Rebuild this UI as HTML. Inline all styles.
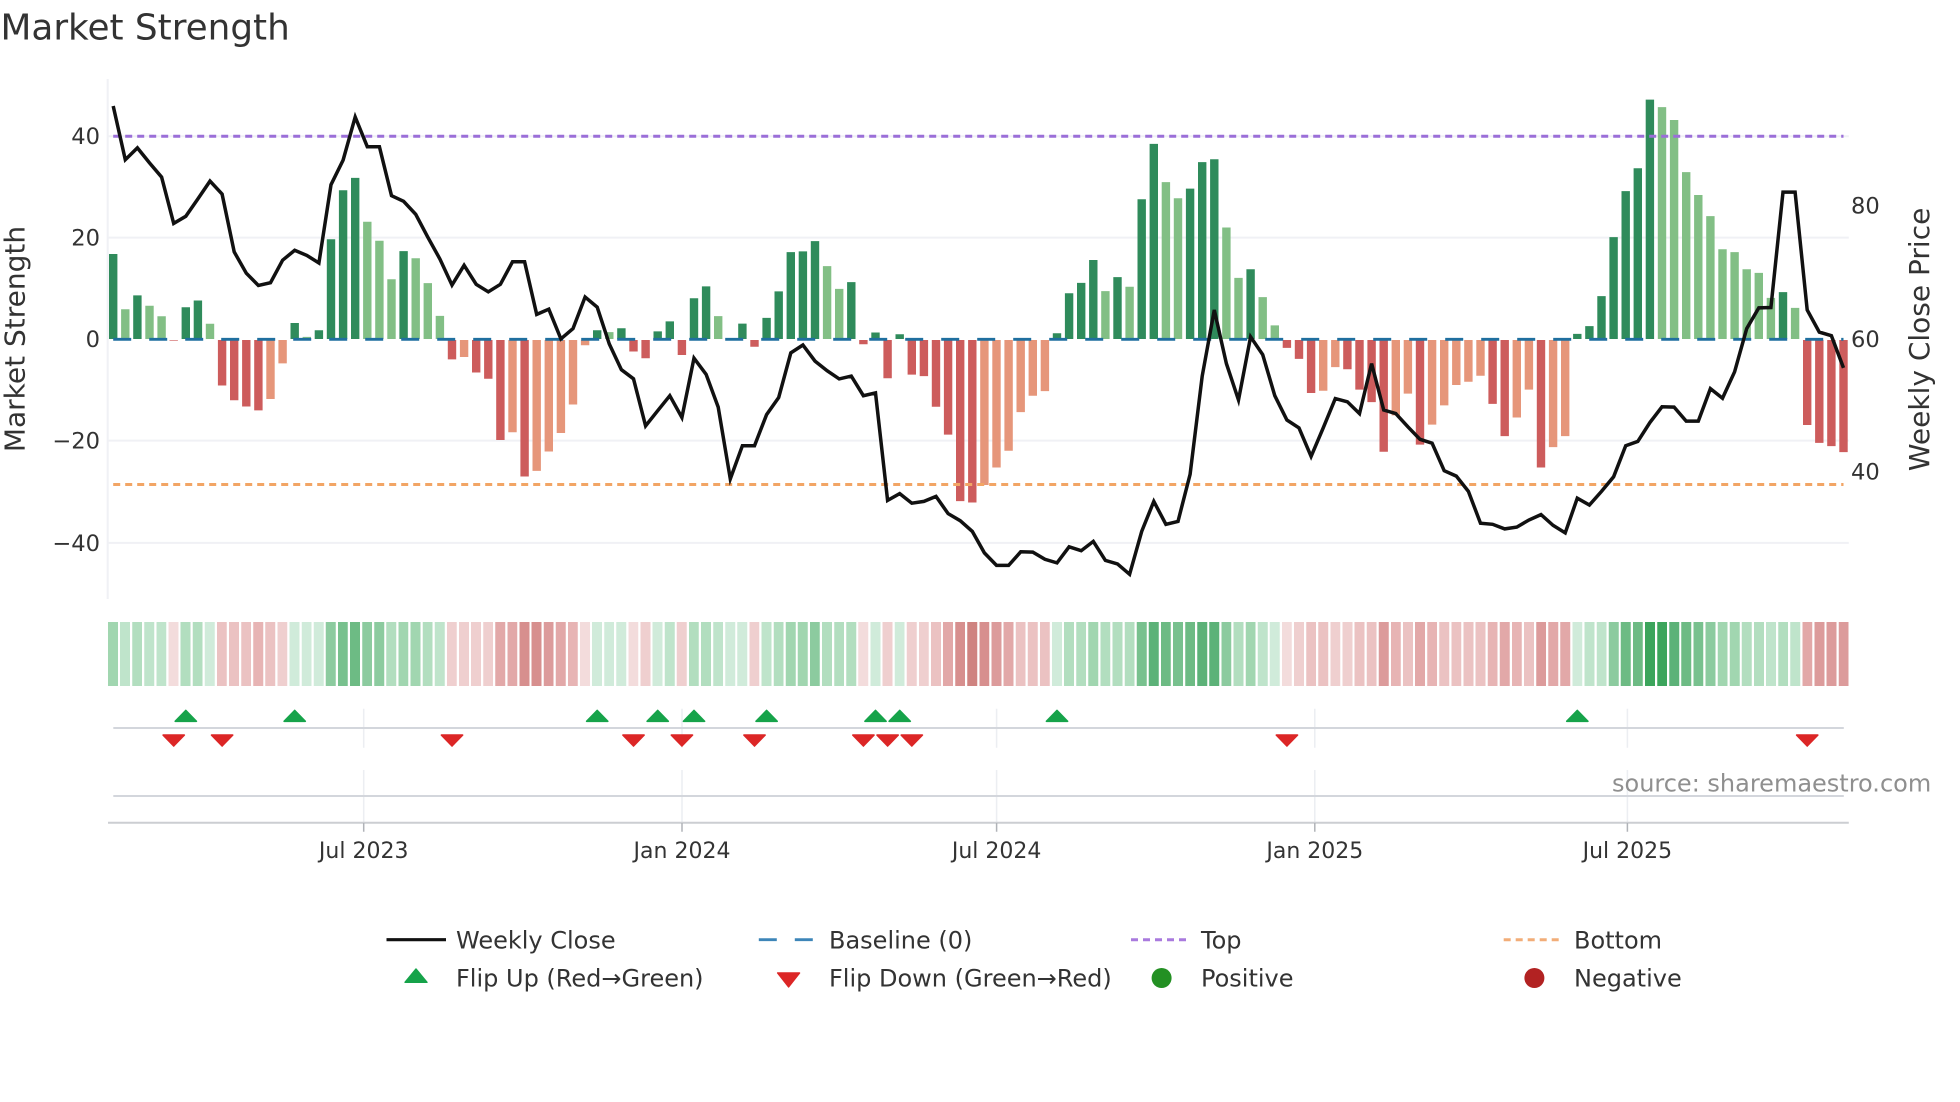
<!DOCTYPE html>
<html><head><meta charset="utf-8"><title>Market Strength</title>
<style>
html,body{margin:0;padding:0;background:#fff}
body{width:1960px;height:1102px;position:relative;overflow:hidden}
svg{position:absolute;left:0;top:0}
text{font-family:"DejaVu Sans","Liberation Sans",sans-serif;fill:#333}
.t{font-size:22.6px}.l{font-size:24px}
#s{position:absolute;left:108.2px;top:622px;width:6962.4px;height:64px;display:grid;grid-template-columns:repeat(144,1fr);column-gap:8.8px;transform:scale(.25,1);transform-origin:0 0}
#s i{display:block}
.g1{background:#d0ebda}.g2{background:#bfe4cb}.g3{background:#b2debf}.g4{background:#a1d6b0}.g5{background:#8ccb9f}.g6{background:#78c18e}.g7{background:#6dbb84}.g8{background:#5cb278}.g9{background:#3ca55c}
.r1{background:#f3dcdc}.r2{background:#efcfcf}.r3{background:#ebc2c2}.r4{background:#e7b4b4}.r5{background:#e2a8a8}.r6{background:#dc9b9b}.r7{background:#d78f8e}.r8{background:#cf8380}
</style></head><body>
<svg width="1960" height="1102" viewBox="0 0 1960 1102" xmlns="http://www.w3.org/2000/svg">
<text x="0.5" y="39.5" style="font-size:35.8px">Market Strength</text>
<text transform="translate(24.5 339) rotate(-90)" text-anchor="middle" style="font-size:28px">Market Strength</text>
<text transform="translate(1929 339.4) rotate(-90)" text-anchor="middle" style="font-size:28px">Weekly Close Price</text>
<g stroke="#f0f1f5" stroke-width="2" fill="none">
<path d="M107.7 79V599M108 237.6H1848.8M108 440.6H1848.8M108 542.9H1848.8M108 136.2H1848.8"/>
</g>
<g class="t" text-anchor="end">
<text class="t" x="100" y="144.2">40</text>
<text class="t" x="100" y="245.6">20</text>
<text class="t" x="100" y="347.2">0</text>
<text class="t" x="100" y="448.5">−20</text>
<text class="t" x="100" y="550.9">−40</text>
</g>
<text class="t" x="1851" y="213.4">80</text>
<text class="t" x="1851" y="346.9">60</text>
<text class="t" x="1851" y="479.4">40</text>
<g transform="translate(113.2 0)" fill="none" stroke-width="8.4">
<path stroke="#2f8b5b" d="M0 339V254M24.2 339V295.4M72.6 339V307.2M84.7 339V300.5M181.5 339V323M205.7 339V330.2M217.8 339V239.2M229.9 339V190.2M242 339V177.9M290.4 339V251.1M484 339V330.2M508.2 339V328.2M544.5 339V331.4M556.6 339V321.4M580.8 339V298.2M592.9 339V286.4M629.2 339V323.6M653.4 339V317.9M665.5 339V291.4M677.6 339V252.1M689.7 339V251.4M701.8 339V241.1M738.1 339V282.1M762.3 339V332.5M786.5 339V334.3M943.8 339V333.2M955.9 339V293.2M968 339V282.9M980.1 339V260M1004.3 339V277.1M1028.5 339V199.3M1040.6 339V143.9M1076.9 339V188.6M1089 339V162.1M1101.1 339V159.3M1137.4 339V269.3M1464.1 339V333.9M1476.2 339V326.1M1488.3 339V296.1M1500.4 339V237.1M1512.5 339V191.1M1524.6 339V168.2M1536.7 339V99.6M1669.8 339V292.1"/>
<path stroke="#82bf85" d="M12.1 339V309.2M36.3 339V305.7M48.4 339V316.3M96.8 339V323.8M193.6 339V336.9M254.1 339V221.8M266.2 339V240.8M278.3 339V279.2M302.5 339V258.2M314.6 339V283.1M326.7 339V315.9M496.1 339V332.1M605 339V316.1M713.9 339V266.1M726 339V288.9M992.2 339V291.1M1016.4 339V286.8M1052.7 339V182.1M1064.8 339V198.2M1113.2 339V227.5M1125.3 339V277.9M1149.5 339V297.1M1161.6 339V325.4M1548.8 339V107.1M1560.9 339V120M1573 339V172.1M1585.1 339V195M1597.2 339V216.1M1609.3 339V249.3M1621.4 339V252.1M1633.5 339V269.3M1645.6 339V272.9M1657.7 339V297.9M1681.9 339V307.9"/>
<path stroke="#cd5c5c" d="M60.5 340V340.6M108.9 340V385.5M121 340V400.2M133.1 340V406.5M145.2 340V410.4M338.8 340V359.4M363 340V372.5M375.1 340V378.8M387.2 340V440M411.4 340V476.5M520.3 340V351.5M532.4 340V358.2M568.7 340V355M641.3 340V346.8M750.2 340V344.3M774.4 340V378.2M798.6 340V374.6M810.7 340V376.1M822.8 340V406.8M834.9 340V434.6M847 340V501.1M859.1 340V502.5M1173.7 340V347.9M1185.8 340V358.9M1197.9 340V393M1234.2 340V369.3M1246.3 340V389.6M1258.4 340V402.1M1270.5 340V451.8M1306.8 340V444.6M1379.4 340V403.9M1391.5 340V436.1M1427.8 340V467.5M1694 340V425M1706.1 340V442.9M1718.2 340V446.1M1730.3 340V452.1"/>
<path stroke="#e6967a" d="M157.3 340V399M169.4 340V363.4M350.9 340V357M399.3 340V432.2M423.5 340V470.9M435.6 340V451.5M447.7 340V433M459.8 340V404.5M471.9 340V345.2M871.2 340V485M883.3 340V467.5M895.4 340V450.7M907.5 340V412.1M919.6 340V395.7M931.7 340V391.1M1210 340V390.7M1222.1 340V367.1M1282.6 340V415.4M1294.7 340V393.6M1318.9 340V424.6M1331 340V405.4M1343.1 340V385M1355.2 340V381.8M1367.3 340V375.7M1403.6 340V417.5M1415.7 340V389.6M1439.9 340V447.1M1452 340V436.1"/>
<path stroke="#1f6f9f" stroke-width="2.9" stroke-dasharray="18 18" d="M0 339.3H1730.3"/>
<path stroke="#9b6fd8" stroke-width="3" stroke-dasharray="7 5" d="M0 136.3H1730.3"/>
<path stroke="#f2a565" stroke-width="3" stroke-dasharray="7 5" d="M0 484.5H1730.3"/>
<polyline stroke="#111" stroke-width="3.5" stroke-linejoin="miter" points="0,106 12.1,159.7 24.2,147.9 36.3,162.9 48.4,177.1 60.5,223.4 72.6,216.3 84.7,198.9 96.8,181.1 108.9,194.1 121,251.9 133.1,273.2 145.2,285.5 157.3,282.7 169.4,260.2 181.5,250.3 193.6,255.4 205.7,263 217.8,184.7 229.9,160.1 242,117 254.1,146.7 266.2,146.7 278.3,195.7 290.4,201.3 302.5,214.3 314.6,237.2 326.7,259 338.8,285.1 350.9,265.3 363,284.3 375.1,291.8 387.2,284.3 399.3,261.8 411.4,261.8 423.5,314.4 435.6,309.2 447.7,338.9 459.8,328.6 471.9,297 484,307.2 496.1,344 508.2,369.7 520.3,378.8 532.4,425.9 544.5,410.7 556.6,395.7 568.7,417.5 580.8,358.2 592.9,374.3 605,407.1 617.1,478.9 629.2,445.7 641.3,445.7 653.4,414.6 665.5,397.5 677.6,352.9 689.7,345 701.8,361.1 713.9,370.7 726,378.9 738.1,376.1 750.2,395.7 762.3,392.9 774.4,500.4 786.5,493.6 798.6,503.2 810.7,501.4 822.8,496.4 834.9,513.6 847,520.7 859.1,531.4 871.2,552.9 883.3,565.4 895.4,565.4 907.5,551.8 919.6,552.1 931.7,559.3 943.8,562.9 955.9,546.8 968,550.7 980.1,541.4 992.2,560.4 1004.3,563.9 1016.4,574.3 1028.5,531.4 1040.6,501.4 1052.7,524.3 1064.8,521.4 1076.9,474.3 1089,376.1 1101.1,310 1113.2,363.6 1125.3,400 1137.4,336.8 1149.5,354.6 1161.6,395.7 1173.7,420 1185.8,427.9 1197.9,456.4 1210,427.9 1222.1,398.6 1234.2,401.8 1246.3,413.6 1258.4,363.6 1270.5,410 1282.6,413.6 1294.7,426.8 1306.8,439.3 1318.9,443.2 1331,470.7 1343.1,476.1 1355.2,491.4 1367.3,523.2 1379.4,524.3 1391.5,528.9 1403.6,527.1 1415.7,520 1427.8,514.6 1439.9,525.4 1452,532.9 1464.1,498.2 1476.2,505 1488.3,491.4 1500.4,476.8 1512.5,445.7 1524.6,441.4 1536.7,422.5 1548.8,406.8 1560.9,407.1 1573,421.1 1585.1,421.1 1597.2,388.6 1609.3,398.2 1621.4,371.8 1633.5,328.6 1645.6,307.9 1657.7,307.5 1669.8,192.1 1681.9,192.1 1694,310 1706.1,332.1 1718.2,335.7 1730.3,367.9"/>
</g>
<g fill="none">
<path stroke="#eceef2" stroke-width="1.5" d="M363.7 708.7V747.7M363.7 770V822M682 708.7V747.7M682 770V822M996.6 708.7V747.7M996.6 770V822M1314.8 708.7V747.7M1314.8 770V822M1627.4 708.7V747.7M1627.4 770V822"/>
<path stroke="#d3d6dc" stroke-width="2" d="M113.3 728H1843.8M113.3 796H1843.8"/>
<path stroke="#ccced2" stroke-width="2" d="M108 822.7H1848.8"/>
<path stroke="#b0b3b8" stroke-width="1.5" d="M363.7 823V831.7M682 823V831.7M996.6 823V831.7M1314.8 823V831.7M1627.4 823V831.7"/>
</g>
<path fill="#16a34a" stroke="#16a34a" stroke-width="1.6" stroke-linejoin="round" d="M185.8 710.4l10.6 10.9h-21.2zM294.7 710.4l10.6 10.9h-21.2zM597.2 710.4l10.6 10.9h-21.2zM657.7 710.4l10.6 10.9h-21.2zM694 710.4l10.6 10.9h-21.2zM766.6 710.4l10.6 10.9h-21.2zM875.5 710.4l10.6 10.9h-21.2zM899.7 710.4l10.6 10.9h-21.2zM1057 710.4l10.6 10.9h-21.2zM1577.3 710.4l10.6 10.9h-21.2z"/>
<path fill="#dc2626" stroke="#dc2626" stroke-width="1.6" stroke-linejoin="round" d="M173.7 746l10.6 -10.9h-21.2zM222.1 746l10.6 -10.9h-21.2zM452 746l10.6 -10.9h-21.2zM633.5 746l10.6 -10.9h-21.2zM681.9 746l10.6 -10.9h-21.2zM754.5 746l10.6 -10.9h-21.2zM863.4 746l10.6 -10.9h-21.2zM887.6 746l10.6 -10.9h-21.2zM911.8 746l10.6 -10.9h-21.2zM1286.9 746l10.6 -10.9h-21.2zM1807.2 746l10.6 -10.9h-21.2z"/>
<g text-anchor="middle">
<text class="t" x="363.7" y="858" style="font-size:22px">Jul 2023</text>
<text class="t" x="682" y="858" style="font-size:22px">Jan 2024</text>
<text class="t" x="996.6" y="858" style="font-size:22px">Jul 2024</text>
<text class="t" x="1314.8" y="858" style="font-size:22px">Jan 2025</text>
<text class="t" x="1627.4" y="858" style="font-size:22px">Jul 2025</text>
</g>
<text x="1612" y="791.7" style="font-size:24px;fill:#8f8f8f">source: sharemaestro.com</text>
<path stroke="#111" stroke-width="3.2" d="M386.5 939.7H446"/>
<path stroke="#3d85b8" stroke-width="2.8" stroke-dasharray="18 18" d="M758.8 939.7H813"/>
<path stroke="#a97ade" stroke-width="3" stroke-dasharray="7 5" d="M1131 939.7H1187"/>
<path stroke="#f2ad78" stroke-width="3" stroke-dasharray="7 5" d="M1503.7 939.7H1559.7"/>
<path fill="#16a34a" stroke="#16a34a" stroke-width="1.4" stroke-linejoin="round" d="M416 969l11 13.3h-22z"/>
<path fill="#dc2626" stroke="#dc2626" stroke-width="1.4" stroke-linejoin="round" d="M788.6 987l11 -14h-22z"/>
<circle cx="1161.6" cy="978" r="10" fill="#239023"/>
<circle cx="1534.4" cy="978" r="10" fill="#b22222"/>
<text class="l" x="456" y="948.3">Weekly Close</text>
<text class="l" x="829" y="948.3">Baseline (0)</text>
<text class="l" x="1201" y="948.3">Top</text>
<text class="l" x="1574" y="948.3">Bottom</text>
<text class="l" x="456" y="986.7">Flip Up (Red→Green)</text>
<text class="l" x="829" y="986.7">Flip Down (Green→Red)</text>
<text class="l" x="1201" y="986.7">Positive</text>
<text class="l" x="1574" y="986.7">Negative</text>
</svg>
<div id="s"><i class="g4"></i><i class="g2"></i><i class="g3"></i><i class="g2"></i><i class="g2"></i><i class="r1"></i><i class="g3"></i><i class="g3"></i><i class="g1"></i><i class="r3"></i><i class="r3"></i><i class="r3"></i><i class="r4"></i><i class="r3"></i><i class="r2"></i><i class="g1"></i><i class="g1"></i><i class="g1"></i><i class="g5"></i><i class="g6"></i><i class="g7"></i><i class="g5"></i><i class="g5"></i><i class="g3"></i><i class="g4"></i><i class="g4"></i><i class="g3"></i><i class="g2"></i><i class="r2"></i><i class="r2"></i><i class="r2"></i><i class="r2"></i><i class="r5"></i><i class="r5"></i><i class="r7"></i><i class="r7"></i><i class="r6"></i><i class="r5"></i><i class="r4"></i><i class="r1"></i><i class="g1"></i><i class="g1"></i><i class="g1"></i><i class="r1"></i><i class="r2"></i><i class="g1"></i><i class="g2"></i><i class="r2"></i><i class="g3"></i><i class="g3"></i><i class="g2"></i><i class="g1"></i><i class="g1"></i><i class="r2"></i><i class="g2"></i><i class="g3"></i><i class="g4"></i><i class="g4"></i><i class="g5"></i><i class="g3"></i><i class="g3"></i><i class="g3"></i><i class="r1"></i><i class="g1"></i><i class="r2"></i><i class="g1"></i><i class="r2"></i><i class="r2"></i><i class="r3"></i><i class="r5"></i><i class="r7"></i><i class="r8"></i><i class="r7"></i><i class="r6"></i><i class="r5"></i><i class="r3"></i><i class="r3"></i><i class="r3"></i><i class="g1"></i><i class="g3"></i><i class="g3"></i><i class="g4"></i><i class="g3"></i><i class="g3"></i><i class="g3"></i><i class="g6"></i><i class="g8"></i><i class="g7"></i><i class="g6"></i><i class="g7"></i><i class="g8"></i><i class="g8"></i><i class="g5"></i><i class="g3"></i><i class="g4"></i><i class="g2"></i><i class="g1"></i><i class="r1"></i><i class="r2"></i><i class="r3"></i><i class="r3"></i><i class="r2"></i><i class="r2"></i><i class="r3"></i><i class="r3"></i><i class="r6"></i><i class="r4"></i><i class="r3"></i><i class="r5"></i><i class="r4"></i><i class="r3"></i><i class="r3"></i><i class="r3"></i><i class="r3"></i><i class="r4"></i><i class="r5"></i><i class="r4"></i><i class="r3"></i><i class="r6"></i><i class="r5"></i><i class="r5"></i><i class="g1"></i><i class="g2"></i><i class="g2"></i><i class="g5"></i><i class="g7"></i><i class="g7"></i><i class="g9"></i><i class="g9"></i><i class="g8"></i><i class="g7"></i><i class="g6"></i><i class="g5"></i><i class="g4"></i><i class="g4"></i><i class="g3"></i><i class="g3"></i><i class="g2"></i><i class="g3"></i><i class="g2"></i><i class="r5"></i><i class="r6"></i><i class="r6"></i><i class="r6"></i></div>
</body></html>
